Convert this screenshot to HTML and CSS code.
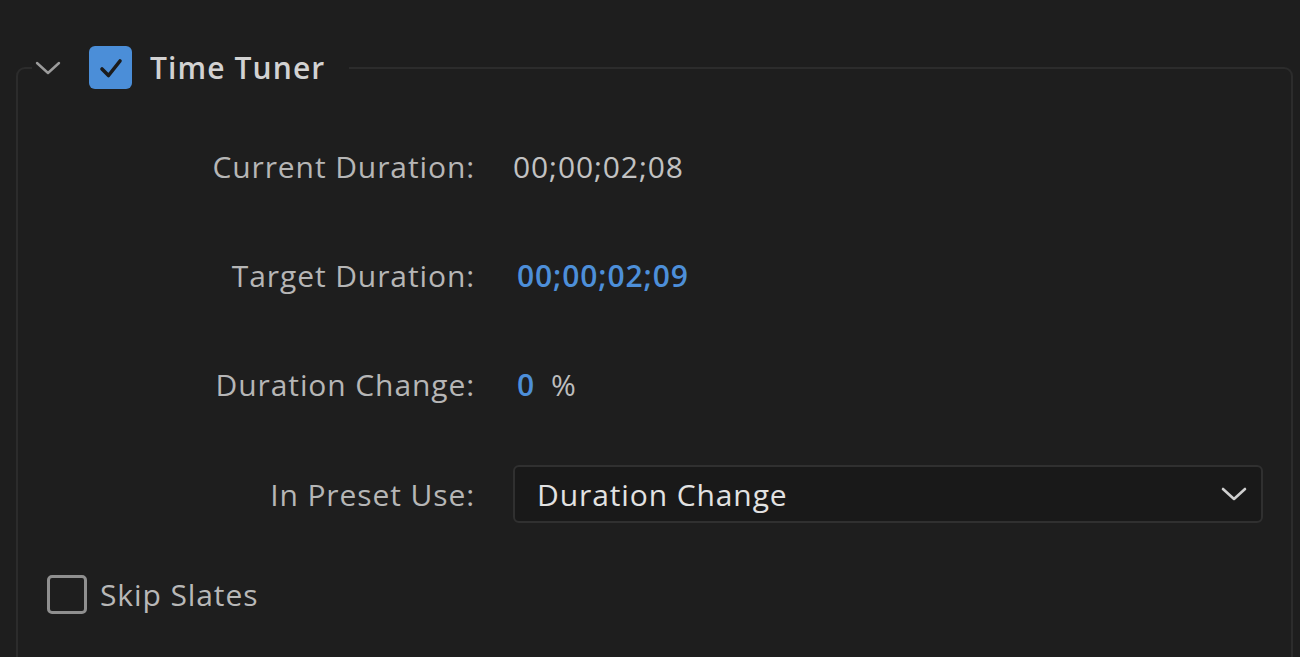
FILE: index.html
```html
<!DOCTYPE html>
<html lang="en">
<head>
<meta charset="utf-8">
<title>Time Tuner</title>
<link rel="stylesheet" href="styles.css">
</head>
<body>
<fieldset class="panel">
  <legend class="panel-head">
    <svg class="chev" width="26" height="14" viewBox="0 0 26 14"><path d="M2 2 L13 12 L24 2" fill="none" stroke="#9c9c9c" stroke-width="2.4" stroke-linecap="round" stroke-linejoin="round"/></svg>
    <span class="cb cb-on"><svg width="30" height="26" viewBox="0 0 30 26"><path d="M6 14 L12.5 20.5 L24 6" fill="none" stroke="#1b1b1b" stroke-width="3.6" stroke-linecap="round" stroke-linejoin="round"/></svg></span>
    <span class="title">Time Tuner</span>
  </legend>
  <div class="rows">
    <div class="row"><span class="label">Current Duration:</span><span class="val">00;00;02;08</span></div>
    <div class="row"><span class="label">Target Duration:</span><span class="val blue tgt">00;00;02;09</span></div>
    <div class="row"><span class="label">Duration Change:</span><span class="val"><span class="blue zero">0</span><span class="pct">%</span></span></div>
    <div class="row"><span class="label">In Preset Use:</span>
      <div class="select"><span>Duration Change</span>
        <svg width="26" height="14" viewBox="0 0 26 14"><path d="M2 2 L13 12 L24 2" fill="none" stroke="#cfcfcf" stroke-width="2.6" stroke-linecap="round" stroke-linejoin="round"/></svg>
      </div>
    </div>
  </div>
  <div class="skip"><span class="cb cb-off"></span><span class="skip-label">Skip Slates</span></div>
</fieldset>
</body>
</html>
```
FILE: styles.css
```css
html, body {
  margin: 0;
  padding: 0;
  background: #1e1e1e;
  height: 657px;
  overflow: hidden;
  font-family: "Open Sans", "Noto Sans", sans-serif;
}
body {
  display: flex;
  flex-direction: column;
}
.panel {
  flex: 1;
  min-height: 0;
  margin: 46px 7px 0 16px;
  padding: 0;
  border: 2px solid #2c2c2c;
  border-bottom: 0;
  border-radius: 9px 9px 0 0;
  box-sizing: border-box;
}
.panel-head {
  display: flex;
  align-items: center;
  padding: 0 24px 0 0;
  margin-left: 14px;
}
.chev { margin: 0 28px 0 3px; }
.cb {
  display: inline-flex;
  align-items: center;
  justify-content: center;
  box-sizing: border-box;
  width: 43px;
  height: 43px;
  border-radius: 6px;
}
.cb-on { background: #4b8ed8; }
.cb-off {
  width: 40px;
  height: 39px;
  border: 3px solid #8f8f8f;
  border-radius: 5px;
}
.title {
  margin-left: 18px;
  font-size: 30px;
  letter-spacing: 1.1px;
  font-weight: 600;
  color: #d2d2d2;
}
.rows {
  display: flex;
  flex-direction: column;
  gap: 52px;
  margin-top: 49px;
}
.row {
  display: grid;
  grid-template-columns: 457px 1fr;
  column-gap: 38px;
  align-items: center;
  height: 57px;
  margin-right: 28px;
  font-size: 30px;
  letter-spacing: 0.9px;
}
.label {
  text-align: right;
  color: #b6b6b6;
}
.val {
  color: #c2c2c2;
}
.blue { color: #4d8fd9; font-weight: 600; }
.tgt { margin-left: 4px; }
.zero { margin-left: 4px; }
.pct { margin-left: 16px; color: #bdbdbd; }
.select {
  display: flex;
  align-items: center;
  justify-content: space-between;
  height: 58px;
  box-sizing: border-box;
  border: 2px solid #303030;
  border-radius: 6px;
  background: #191919;
  padding: 0 14px 0 22px;
  color: #e2e2e2;
}
.skip {
  display: flex;
  align-items: center;
  margin: 52px 0 0 29px;
}
.skip-label {
  margin-left: 13px;
  font-size: 30px;
  letter-spacing: 0.9px;
  color: #b8b8b8;
}
```
